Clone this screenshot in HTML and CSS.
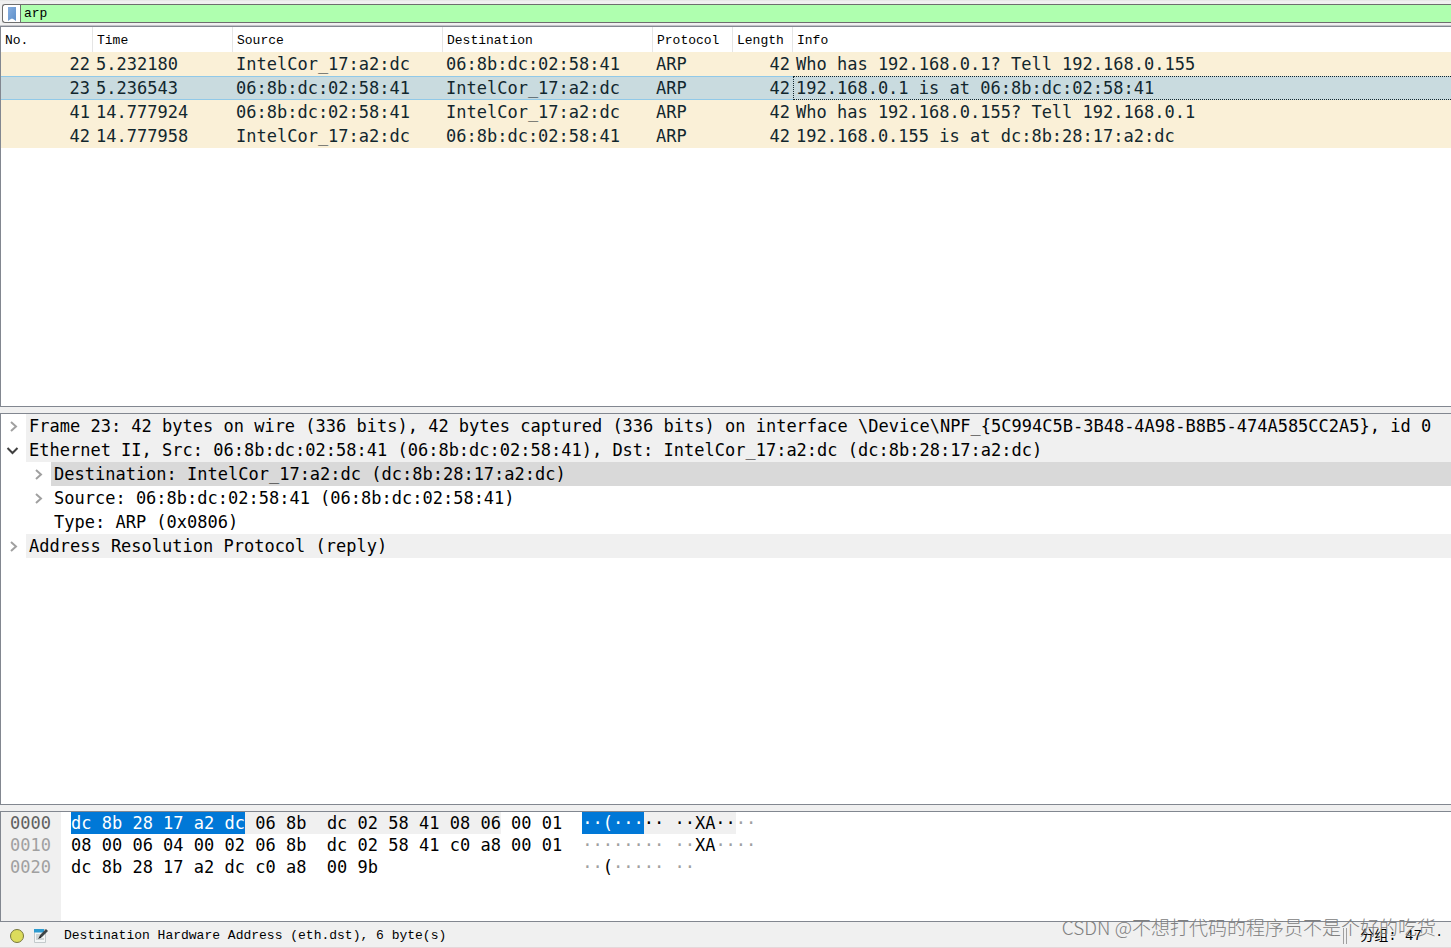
FILE: index.html
```
<!DOCTYPE html>
<html lang="zh-CN">
<head>
<meta charset="utf-8">
<title>Packet capture</title>
<link rel="stylesheet" href="styles.css">
</head>
<body>
<div class="app">
  <div class="toolbar">
    <div class="filter">
      <button class="bookmark" type="button" aria-label="Filter bookmarks">
        <svg width="8" height="14" viewBox="0 0 8 14"><defs><linearGradient id="ribbon" x1="0" y1="0" x2="1" y2="1"><stop offset="0" stop-color="#86aee0"/><stop offset="1" stop-color="#5f8fc8"/></linearGradient></defs><path d="M0 0H8V14L6 12.5L4 11.5L2 12.5L0 14Z" fill="url(#ribbon)"/></svg>
      </button>
      <input class="filter-input" type="text" value="arp" aria-label="Display filter">
    </div>
  </div>

  <section class="panel">
    <table class="packets">
      <colgroup><col class="c-no"><col class="c-time"><col class="c-addr"><col class="c-addr"><col class="c-proto"><col class="c-len"><col></colgroup>
      <thead>
        <tr><th>No.</th><th>Time</th><th>Source</th><th>Destination</th><th>Protocol</th><th>Length</th><th>Info</th></tr>
      </thead>
      <tbody>
        <tr><td class="num">22</td><td>5.232180</td><td>IntelCor_17:a2:dc</td><td>06:8b:dc:02:58:41</td><td>ARP</td><td class="num">42</td><td>Who has 192.168.0.1? Tell 192.168.0.155</td></tr>
        <tr class="selected"><td class="num">23</td><td>5.236543</td><td>06:8b:dc:02:58:41</td><td>IntelCor_17:a2:dc</td><td>ARP</td><td class="num">42</td><td class="focus">192.168.0.1 is at 06:8b:dc:02:58:41</td></tr>
        <tr><td class="num">41</td><td>14.777924</td><td>06:8b:dc:02:58:41</td><td>IntelCor_17:a2:dc</td><td>ARP</td><td class="num">42</td><td>Who has 192.168.0.155? Tell 192.168.0.1</td></tr>
        <tr><td class="num">42</td><td>14.777958</td><td>IntelCor_17:a2:dc</td><td>06:8b:dc:02:58:41</td><td>ARP</td><td class="num">42</td><td>192.168.0.155 is at dc:8b:28:17:a2:dc</td></tr>
      </tbody>
    </table>
  </section>

  <section class="panel">
    <ul class="tree">
      <li><svg class="arrow" viewBox="0 0 25 24"><path d="M10 8L15 12.5L10 17"/></svg><span class="label shaded">Frame 23: 42 bytes on wire (336 bits), 42 bytes captured (336 bits) on interface \Device\NPF_{5C994C5B-3B48-4A98-B8B5-474A585CC2A5}, id 0</span></li>
      <li><svg class="arrow open" viewBox="0 0 25 24"><path d="M6.500 10L11.500 15L16.500 10"/></svg><span class="label shaded">Ethernet II, Src: 06:8b:dc:02:58:41 (06:8b:dc:02:58:41), Dst: IntelCor_17:a2:dc (dc:8b:28:17:a2:dc)</span></li>
      <li class="child"><svg class="arrow" viewBox="0 0 25 24"><path d="M10 8L15 12.5L10 17"/></svg><span class="label current">Destination: IntelCor_17:a2:dc (dc:8b:28:17:a2:dc)</span></li>
      <li class="child"><svg class="arrow" viewBox="0 0 25 24"><path d="M10 8L15 12.5L10 17"/></svg><span class="label">Source: 06:8b:dc:02:58:41 (06:8b:dc:02:58:41)</span></li>
      <li class="child"><span class="arrow"></span><span class="label">Type: ARP (0x0806)</span></li>
      <li><svg class="arrow" viewBox="0 0 25 24"><path d="M10 8L15 12.5L10 17"/></svg><span class="label shaded">Address Resolution Protocol (reply)</span></li>
    </ul>
  </section>

  <section class="panel hex">
    <pre class="offsets"><span class="active">0000</span>
0010
0020</pre>
    <pre class="bytes"><span class="sel">dc 8b 28 17 a2 dc</span><span class="layer"> 06 8b  dc 02 58 41 08 06</span> 00 01
08 00 06 04 00 02 06 8b  dc 02 58 41 c0 a8 00 01
dc 8b 28 17 a2 dc c0 a8  00 9b</pre>
    <pre class="ascii"><span class="sel">··(···</span><span class="layer">·· ··XA··</span><i>··</i>
<i>········ ··</i>XA<i>····</i>
<i>··</i>(<i>····· ··</i></pre>
  </section>

  <footer class="status">
    <button type="button" aria-label="Expert information"><svg width="16" height="16" viewBox="0 0 16 16"><circle cx="8" cy="8" r="6.500" fill="#dcdc5c" stroke="#77773c"/></svg></button>
    <button type="button" aria-label="Capture comment"><svg width="16" height="16" viewBox="0 0 16 16"><path d="M1.500 1.500H12.500V14.500H1.500Z" fill="#f4f6f6" stroke="#c3c9cb"/><path d="M1 1H11V4.500H1Z" fill="#2d9bd0"/><path d="M3 7H7M3 9H6M3 11H11" stroke="#aab3b6"/><path d="M6 10L7 7L13 1L15 3L9 9Z" fill="#3f4648"/><path d="M5 11L7 8L8.500 9.500Z" fill="#222"/></svg></button>
    <span class="message">Destination Hardware Address (eth.dst), 6 byte(s)</span>
    <span class="grip"></span>
    <span class="count">分组: 47</span><span>·</span>
    <span class="watermark">CSDN @不想打代码的程序员不是个好的吃货</span>
  </footer>
</div>
</body>
</html>
```
FILE: styles.css
```
* { box-sizing: border-box; }

body {
  margin: 0;
  background: #f0f0f0;
  color: #000;
  font-family: "DejaVu Sans Mono", monospace;
  font-size: 17px;
}

.app {
  display: grid;
  grid-template-rows: 26px 381fr 6px 392fr 6px 111fr 26px;
  height: 100vh;
  overflow: hidden;
}
.app > :nth-child(3) { grid-row: 4; }
.app > :nth-child(4) { grid-row: 6; }
.app > :nth-child(5) { grid-row: 7; }

.toolbar {
  padding: 3px 0 2px 2px;
  border-top: 1px solid #e8e8e8;
  border-bottom: 1px solid #c3c3c8;
}
.filter {
  display: flex;
  height: 19px;
  border: 1px solid #6e6e6e;
  border-right: 0;
  border-radius: 3px 0 0 3px;
  background: #fff;
}
.bookmark {
  display: flex;
  align-items: center;
  justify-content: center;
  width: 18px;
  padding: 0;
  border: 0;
  border-right: 1px solid #6e6e6e;
  background: none;
}
.filter-input {
  flex: 1;
  min-width: 0;
  padding: 1px 3px 0;
  border: 0;
  outline: 0;
  background: #afffaf;
  font: 13px/16px "Liberation Mono", monospace;
}

.panel {
  min-height: 0;
  overflow: hidden;
  border: 1px solid #828790;
  border-right: 0;
  background: #fff;
}

.packets {
  width: 100%;
  table-layout: fixed;
  border-collapse: separate;
  border-spacing: 0;
  color: #12272e;
}
.c-no { width: 92px; }
.c-time { width: 140px; }
.c-addr { width: 210px; }
.c-proto { width: 80px; }
.c-len { width: 60px; }
.packets th {
  height: 25px;
  padding: 2px 4px 0;
  border-right: 1px solid #e5e5e5;
  color: #000;
  font: 13px/23px "Liberation Mono", monospace;
  text-align: left;
}
.packets th:last-child { border-right: 0; }
.packets td {
  height: 24px;
  padding: 0 3px;
  border: solid transparent;
  border-width: 1px 0;
  background: #faf0d7;
  line-height: 22px;
  white-space: nowrap;
}
.packets .num { text-align: right; }
.packets .selected td {
  border-color: #91c9e8;
  background: #c9dbdf;
}
.packets .selected .focus {
  border: 1px dotted #12272e;
  border-right: 0;
  padding-left: 2px;
}

.tree {
  margin: 0;
  padding: 0;
  list-style: none;
}
.tree li { display: flex; height: 24px; }
.tree .child { padding-left: 25px; }
.arrow {
  flex: none;
  width: 25px;
  height: 24px;
  fill: none;
  stroke: #a0a0a0;
  stroke-width: 2;
}
.arrow.open { stroke: #404040; }
.label {
  flex: 1;
  padding-left: 3px;
  line-height: 24px;
  white-space: nowrap;
}
.shaded { background: #f0f0f0; }
.current { background: #d9d9d9; }

.hex { display: flex; }
.hex pre {
  margin: 0;
  font: inherit;
  line-height: 22px;
}
.hex pre span { display: inline-block; height: 22px; vertical-align: top; }
.hex i { color: #a0a0a0; font-style: normal; }
.offsets {
  width: 60px;
  padding-left: 9px;
  background: #f0f0f0;
  color: #a0a0a0;
}
.offsets .active { color: #606060; }
.bytes { padding-left: 10px; }
.ascii { padding-left: 20px; }
.sel { background: #0078d7; color: #fff; }
.layer { background: #f0f0f0; }

.status {
  position: relative;
  display: flex;
  align-items: center;
  gap: 8px;
  padding: 2px 8px 0 9px;
  border-bottom: 1px solid #e6d6d9;
  font: 13px/20px "Liberation Mono", "Noto Sans CJK SC", monospace;
}
.status button {
  width: 16px;
  height: 20px;
  padding: 0;
  border: 0;
  background: none;
}
.status svg { display: block; }
.message { flex: 1; padding-left: 7px; }
.grip {
  width: 4px;
  height: 16px;
  border: solid #a0a0a0;
  border-width: 0 1px;
}
.count { width: 72px; padding-left: 5px; font-size: 14px; }
.watermark {
  position: absolute;
  right: 15px;
  bottom: 6px;
  color: #808080;
  font: 19px/28px "Noto Sans CJK SC", sans-serif;
  font-weight: 300;
  white-space: nowrap;
}
```
